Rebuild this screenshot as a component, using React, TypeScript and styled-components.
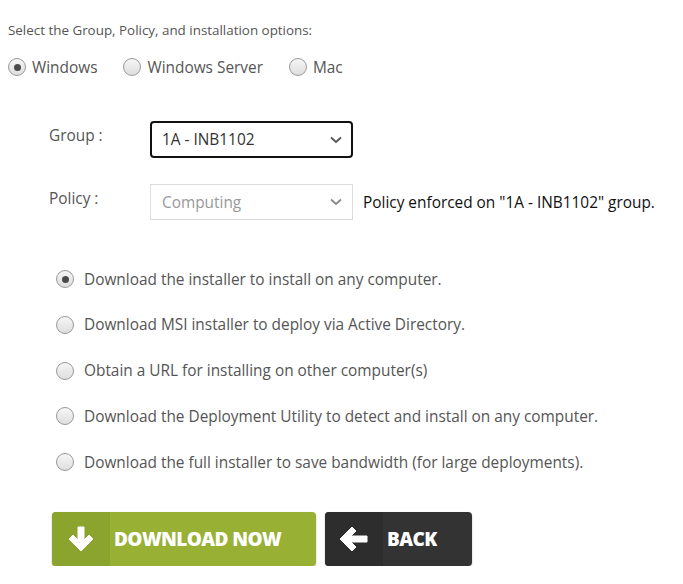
import React from "react";
import styled, { createGlobalStyle } from "styled-components";

const Global = createGlobalStyle`
  html, body { margin: 0; padding: 0; background: #fff; }
  body { font-family: "Open Sans", "Noto Sans", sans-serif; color: #555; }
`;

const Page = styled.div`
  padding: 21px 0 0 8px;
  width: 675px;
`;

const Intro = styled.div`
  font-size: 13.4px;
  line-height: 18px;
  color: #555;
`;

const OsRow = styled.div`
  display: flex;
  align-items: center;
  gap: 26px;
  margin-top: 16px;
  height: 24px;
`;

const RadioLabel = styled.label`
  display: flex;
  align-items: center;
  gap: 6px;
  font-size: 15.4px;
  color: #555;
`;

const Circle = styled.span<{ $checked?: boolean }>`
  width: 16px;
  height: 16px;
  border-radius: 50%;
  border: 1px solid #999;
  background: linear-gradient(#f6f6f6, #dedede);
  display: inline-flex;
  align-items: center;
  justify-content: center;
  flex: none;
  &::after {
    content: "";
    width: 7px;
    height: 7px;
    border-radius: 50%;
    background: #4a4a4a;
    display: ${(p) => (p.$checked ? "block" : "none")};
  }
`;

const Form = styled.div`
  margin-top: 42px;
  padding-left: 41px;
  display: flex;
  flex-direction: column;
  gap: 26px;
`;

const FieldRow = styled.div`
  display: flex;
  align-items: center;
`;

const FieldLabel = styled.div`
  width: 101px;
  font-size: 15.4px;
  color: #555;
  align-self: flex-start;
  padding-top: 4px;
`;

const Select = styled.div<{ $active?: boolean }>`
  box-sizing: border-box;
  width: 203px;
  height: ${(p) => (p.$active ? "37px" : "36px")};
  border: ${(p) => (p.$active ? "2px solid #111" : "1px solid #dcdcdc")};
  border-radius: ${(p) => (p.$active ? "4px" : "0")};
  display: flex;
  align-items: center;
  justify-content: space-between;
  padding: 0 ${(p) => (p.$active ? "9px" : "10px")} 0 ${(p) => (p.$active ? "10px" : "11px")};
  font-size: 15.4px;
  color: ${(p) => (p.$active ? "#333" : "#999")};
`;

const Note = styled.div`
  margin-left: 10px;
  font-size: 15.4px;
  color: #111;
`;

const Options = styled.div`
  margin-top: 47px;
  padding-left: 48px;
  display: flex;
  flex-direction: column;
  gap: 21.75px;
`;

const OptionLabel = styled(RadioLabel)`
  gap: 10px;
  height: 24px;
`;

const Buttons = styled.div`
  margin-top: 38px;
  padding-left: 44px;
  display: flex;
  gap: 9px;
`;

const Btn = styled.div<{ $tone: "green" | "dark" }>`
  display: flex;
  height: 54px;
  border-radius: 4px;
  overflow: hidden;
  background: ${(p) => (p.$tone === "green" ? "#98b135" : "#333333")};
  box-shadow: 0 1px 2px rgba(0, 0, 0, 0.25);
  width: ${(p) => (p.$tone === "green" ? "264px" : "147px")};
  color: #fff;
  font-family: "Open Sans", sans-serif;
  font-weight: 800;
  font-size: 19px;
  letter-spacing: -0.6px;
  align-items: center;
`;

const IconCell = styled.div<{ $tone: "green" | "dark" }>`
  width: 58px;
  height: 100%;
  display: flex;
  align-items: center;
  justify-content: center;
  background: ${(p) => (p.$tone === "green" ? "#8ba42d" : "#2d2d2d")};
  margin-right: 4px;
`;

const Chevron = ({ color }: { color: string }) => (
  <svg width="12" height="8" viewBox="0 0 12 8">
    <path d="M1 1.5 L6 6 L11 1.5" fill="none" stroke={color} strokeWidth="1.8" />
  </svg>
);

const DownArrow = () => (
  <svg width="26" height="28" viewBox="0 0 26 28">
    <path
      d="M10 2 h6 v13 l5 -5 l4 4 l-12 12 l-12 -12 l4 -4 l5 5 z"
      fill="#fff"
      stroke="#fff"
      strokeWidth="1"
      strokeLinejoin="round"
    />
  </svg>
);

const LeftArrow = () => (
  <svg width="30" height="26" viewBox="0 0 30 26">
    <path
      d="M1 13 l12 -12 l4 4 l-5 5 h16 v6 h-16 l5 5 l-4 4 z"
      fill="#fff"
      stroke="#fff"
      strokeWidth="1"
      strokeLinejoin="round"
    />
  </svg>
);

const options = [
  "Download the installer to install on any computer.",
  "Download MSI installer to deploy via Active Directory.",
  "Obtain a URL for installing on other computer(s)",
  "Download the Deployment Utility to detect and install on any computer.",
  "Download the full installer to save bandwidth (for large deployments).",
];

export default function App() {
  return (
    <>
      <Global />
      <Page>
        <Intro>Select the Group, Policy, and installation options:</Intro>
        <OsRow>
          <RadioLabel>
            <Circle $checked />
            Windows
          </RadioLabel>
          <RadioLabel>
            <Circle />
            Windows Server
          </RadioLabel>
          <RadioLabel>
            <Circle />
            Mac
          </RadioLabel>
        </OsRow>
        <Form>
          <FieldRow>
            <FieldLabel>Group :</FieldLabel>
            <Select $active>
              1A - INB1102
              <Chevron color="#555" />
            </Select>
          </FieldRow>
          <FieldRow>
            <FieldLabel>Policy :</FieldLabel>
            <Select>
              Computing
              <Chevron color="#888" />
            </Select>
            <Note>Policy enforced on "1A - INB1102" group.</Note>
          </FieldRow>
        </Form>
        <Options>
          {options.map((o, i) => (
            <OptionLabel key={o}>
              <Circle $checked={i === 0} />
              {o}
            </OptionLabel>
          ))}
        </Options>
        <Buttons>
          <Btn $tone="green">
            <IconCell $tone="green">
              <DownArrow />
            </IconCell>
            DOWNLOAD NOW
          </Btn>
          <Btn $tone="dark">
            <IconCell $tone="dark">
              <LeftArrow />
            </IconCell>
            BACK
          </Btn>
        </Buttons>
      </Page>
    </>
  );
}
